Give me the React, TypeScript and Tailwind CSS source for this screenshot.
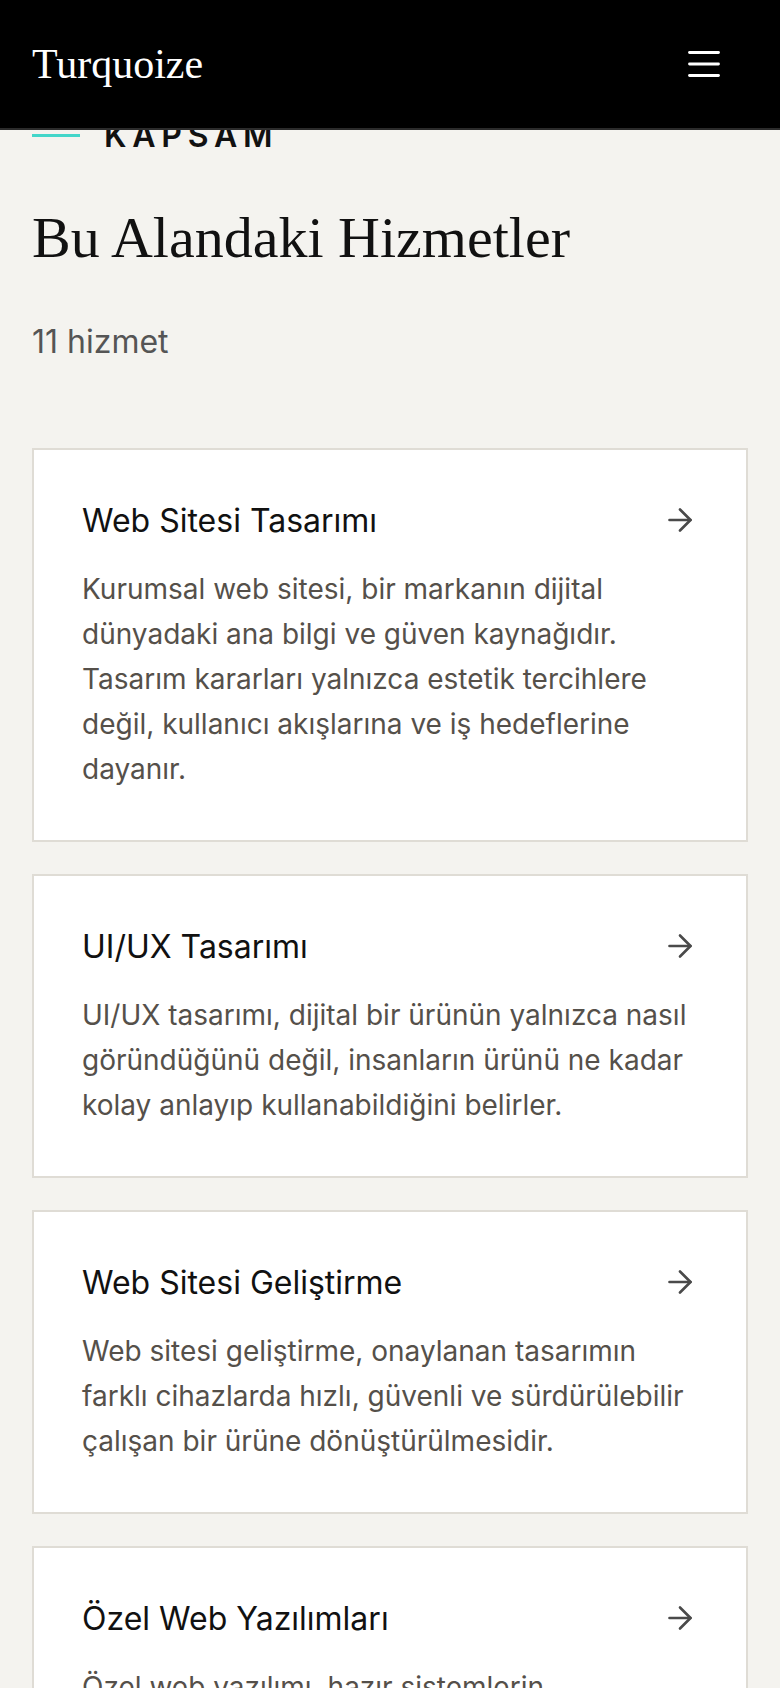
import React from 'react';
import { ArrowRight } from 'lucide-react';

const services = [
  {
    title: 'Web Sitesi Tasarımı',
    text: 'Kurumsal web sitesi, bir markanın dijital dünyadaki ana bilgi ve güven kaynağıdır. Tasarım kararları yalnızca estetik tercihlere değil, kullanıcı akışlarına ve iş hedeflerine dayanır.',
  },
  {
    title: 'UI/UX Tasarımı',
    text: 'UI/UX tasarımı, dijital bir ürünün yalnızca nasıl göründüğünü değil, insanların ürünü ne kadar kolay anlayıp kullanabildiğini belirler.',
  },
  {
    title: 'Web Sitesi Geliştirme',
    text: 'Web sitesi geliştirme, onaylanan tasarımın farklı cihazlarda hızlı, güvenli ve sürdürülebilir çalışan bir ürüne dönüştürülmesidir.',
  },
  {
    title: 'Özel Web Yazılımları',
    text: 'Özel web yazılımı, hazır sistemlerin karşılayamadığı iş süreçlerine özel olarak geliştirilen çözümlerdir.',
  },
  {
    title: 'E-Ticaret Çözümleri',
    text: 'E-ticaret altyapısı, ürünlerin keşfedilmesinden ödemeye kadar tüm satın alma deneyimini kapsar.',
  },
  {
    title: 'SEO Danışmanlığı',
    text: 'Arama motoru optimizasyonu, sitenin doğru kitle tarafından bulunabilmesi için teknik ve içerik düzenlemelerini içerir.',
  },
];

function MenuIcon() {
  return (
    <svg width="32" height="28" viewBox="0 0 32 28" fill="none" stroke="white" strokeWidth="2.8" strokeLinecap="round">
      <line x1="1.5" y1="2.5" x2="30.5" y2="2.5" />
      <line x1="1.5" y1="14" x2="30.5" y2="14" />
      <line x1="1.5" y1="25.5" x2="30.5" y2="25.5" />
    </svg>
  );
}

export default function App() {
  return (
    <div className="min-h-screen bg-[#f4f3ef] font-['Inter',sans-serif]">
      {/* Fixed header */}
      <header className="fixed top-0 inset-x-0 z-20 h-[130px] bg-black border-b-2 border-[#2b2b2b] flex items-center justify-between pl-8 pr-[60px]">
        <span className="font-['Liberation_Serif',serif] text-[42px] leading-none text-white">Turquoize</span>
        <button className="w-[32px] h-[28px] flex items-center justify-center">
          <MenuIcon />
        </button>
      </header>

      <main className="px-8 pt-[120px] pb-16">
        {/* Section label */}
        <div className="flex items-start gap-6">
          <span className="mt-[14px] h-[3px] w-12 bg-[#43d6c9]"></span>
          <span className="text-[32px] leading-none font-semibold tracking-[0.18em] text-[#111]">KAPSAM</span>
        </div>

        <h1 className="mt-[51px] font-['Liberation_Serif',serif] text-[58px] leading-[1.2] text-[#111]">
          Bu Alandaki Hizmetler
        </h1>
        <p className="mt-[45px] text-[32px] leading-[1.5] text-[#555]">11 hizmet</p>

        {/* Service cards */}
        <div className="mt-[82px] flex flex-col gap-8">
          {services.map((s) => (
            <div key={s.title} className="bg-white border-2 border-[#dfdcd5] p-12">
              <div className="flex items-center justify-between">
                <h2 className="text-[32px] leading-[45px] text-[#111]">{s.title}</h2>
                <ArrowRight size={36} strokeWidth={1.75} className="text-[#4a4a4a] shrink-0" />
              </div>
              <p className="mt-6 text-[28px] leading-[45px] text-[#55504a]">{s.text}</p>
            </div>
          ))}
        </div>
      </main>
    </div>
  );
}
